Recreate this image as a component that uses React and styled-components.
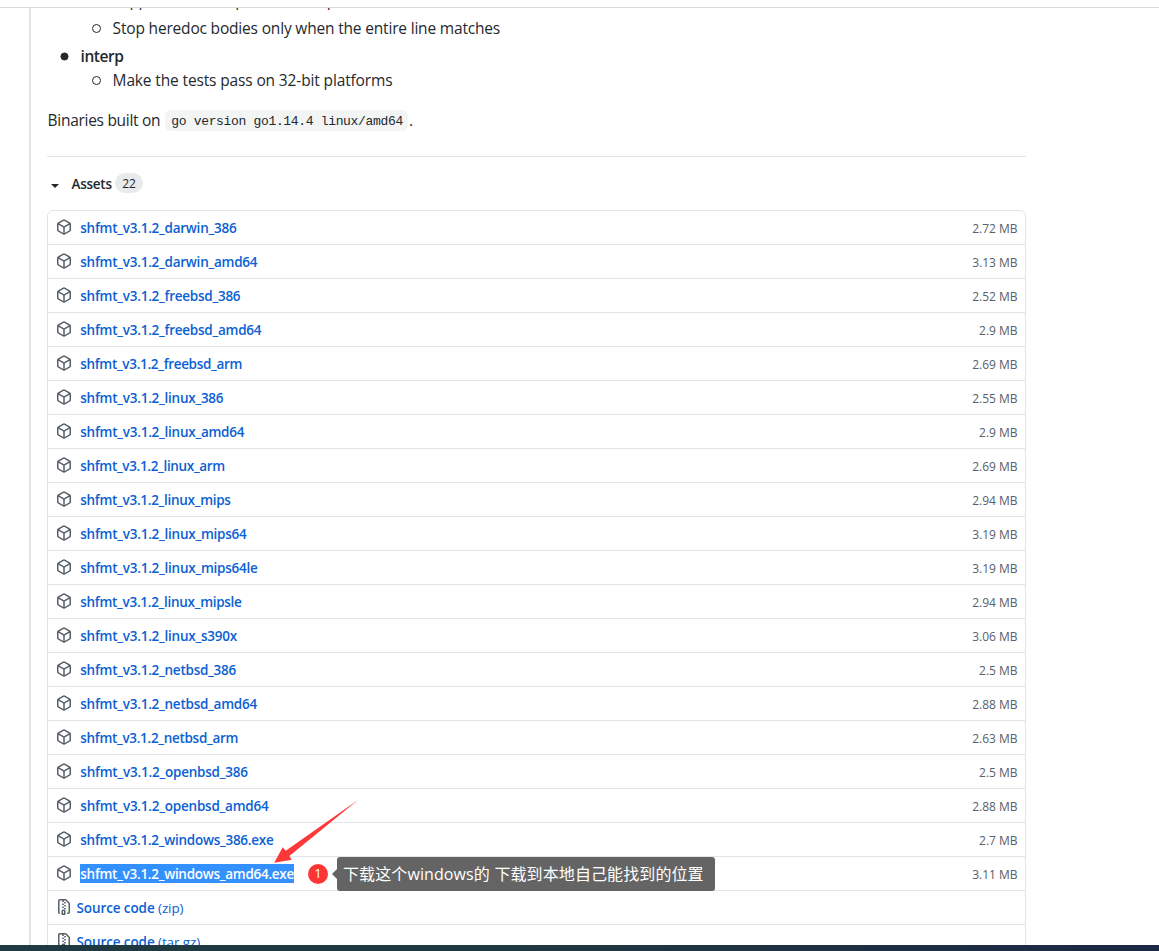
import React from "react";
import styled, { createGlobalStyle } from "styled-components";

const GlobalStyle = createGlobalStyle`
  * { box-sizing: border-box; }
  body {
    margin: 0;
    background: #fff;
    color: #24292e;
    font-family: "Open Sans", "Noto Sans CJK SC", sans-serif;
    font-size: 15.5px;
    line-height: 24px;
  }
`;

const Page = styled.div`
  display: flex;
  flex-direction: column;
  height: 951px;
  overflow: hidden;
`;

const HeaderEdge = styled.header`
  flex: none;
  height: 8px;
  border-bottom: 1px solid #d8dade;
`;

const Viewport = styled.main`
  flex: 1;
  min-height: 0;
  overflow: hidden;
  display: flex;
  padding-left: 29px;
`;

const Release = styled.article`
  width: 997px;
  flex: none;
  height: 1000px;
  padding-left: 16px;
  border-left: 2px solid #e1e4e8;
`;

const Notes = styled.section`
  display: flex;
  flex-direction: column;
  height: 149px;
  border-bottom: 1px solid #e1e4e8;
`;

const Changes = styled.ul`
  list-style: none;
  margin: ${(p) => (p.$nested ? "0" : "-20px 0 0")};
  padding: 0 0 0 32px;
`;

const Change = styled.li`
  display: flex;
  align-items: center;
  height: 24px;
  white-space: nowrap;
  margin-top: ${(p) => p.$gap || 0}px;
  letter-spacing: ${(p) => p.$tracking || -0.18}px;
  font-weight: ${(p) => (p.$strong ? 600 : 400)};

  &::before {
    content: "";
    flex: none;
    width: 7px;
    height: 7px;
    margin: 1px 11.6px 0 -19px;
    border: 1px solid #24292e;
    border-radius: 50%;
    background: ${(p) => (p.$strong ? "#24292e" : "transparent")};
    transform: ${(p) => (p.$strong ? "scale(0.9)" : "none")};
  }
`;

const BuildInfo = styled.p`
  display: flex;
  align-items: center;
  height: 24px;
  margin: 16px 0 0;
  padding-left: 0.6px;
  letter-spacing: -0.29px;
  white-space: nowrap;
`;

const Code = styled.code`
  height: 21px;
  margin: 0 1px 0 5px;
  padding: 1px 5px 0 6px;
  border-radius: 6px;
  background: #f3f4f4;
  font: 13px/21px "Liberation Mono", monospace;
  letter-spacing: -0.33px;
`;

const AssetsSummary = styled.div`
  display: flex;
  align-items: center;
  height: 20px;
  margin: 17px 0 16px;
  padding-left: 4px;
  font-size: 13.5px;
  font-weight: 600;
  letter-spacing: -0.28px;
`;

const Caret = styled.svg`
  width: 8px;
  height: 4px;
  margin: 3px 12.6px 0 0;
  fill: #24292e;
`;

const Counter = styled.span`
  width: 28px;
  height: 20px;
  margin: -2px 0 0 3.4px;
  border-radius: 10px;
  background: #e8eaec;
  font-size: 12px;
  font-weight: 500;
  line-height: 21px;
  text-align: center;
  letter-spacing: 0;
`;

const AssetList = styled.div`
  border: 1px solid #e1e4e8;
  border-radius: 6px;
`;

const AssetRow = styled.div`
  position: relative;
  display: flex;
  align-items: center;
  height: 34px;
  padding: 0 7.4px 0 8px;
  border-bottom: 1px solid #e1e4e8;
`;

const AssetIcon = styled.svg`
  flex: none;
  width: 16px;
  height: 16px;
  margin-top: -2px;
  fill: #586069;
`;

const AssetLink = styled.a`
  height: 19px;
  margin-left: ${(p) => (p.$archive ? 4.5 : 8)}px;
  padding-left: ${(p) => (p.$archive ? 0 : 0.3)}px;
  color: ${(p) => (p.$selected ? "#fff" : "#0b61d3")};
  background: ${(p) => (p.$selected ? "#3390ff" : "transparent")};
  font-size: 13.5px;
  font-weight: 600;
  line-height: 21px;
  letter-spacing: ${(p) => p.$tracking || -0.25}px;
  white-space: nowrap;
`;

const Format = styled.span`
  font-weight: 400;
`;

const AssetSize = styled.small`
  margin: 2px 0 0 auto;
  color: #586069;
  font-size: 12px;
  line-height: 18px;
`;

const Annotation = styled.div`
  position: absolute;
  left: 260px;
  top: 0;
  display: flex;
  align-items: center;
  height: 34px;
`;

const StepBadge = styled.span`
  width: 20px;
  height: 20px;
  border-radius: 50%;
  background: #fd3535;
  color: #fff;
  font-size: 13px;
  line-height: 19px;
  text-align: center;
`;

const Bubble = styled.div`
  position: relative;
  display: flex;
  gap: 4.5px;
  width: 378px;
  height: 34px;
  margin-left: 9px;
  padding-left: 6px;
  border-radius: 3px;
  background: #646464;
  color: #fff;
  font-size: 16px;
  line-height: 34px;
  letter-spacing: 0.1px;
  white-space: nowrap;

  &::before {
    content: "";
    position: absolute;
    left: -5px;
    top: 12px;
    border: solid transparent;
    border-width: 5px 5px 5px 0;
    border-right-color: #646464;
  }
`;

const Arrow = styled.svg`
  position: absolute;
  left: 226px;
  top: -58px;
  width: 86px;
  height: 66px;
  fill: #fd3838;
`;

const Taskbar = styled.footer`
  flex: none;
  height: 6px;
  background: linear-gradient(90deg, #203a42, #203840 45%, #1b2744);
`;

const assets = [
  ["darwin_386", "2.72 MB"],
  ["darwin_amd64", "3.13 MB"],
  ["freebsd_386", "2.52 MB"],
  ["freebsd_amd64", "2.9 MB"],
  ["freebsd_arm", "2.69 MB", -0.32],
  ["linux_386", "2.55 MB"],
  ["linux_amd64", "2.9 MB"],
  ["linux_arm", "2.69 MB", -0.33],
  ["linux_mips", "2.94 MB", -0.29],
  ["linux_mips64", "3.19 MB"],
  ["linux_mips64le", "3.19 MB"],
  ["linux_mipsle", "2.94 MB", -0.29],
  ["linux_s390x", "3.06 MB"],
  ["netbsd_386", "2.5 MB"],
  ["netbsd_amd64", "2.88 MB"],
  ["netbsd_arm", "2.63 MB", -0.31],
  ["openbsd_386", "2.5 MB", -0.22],
  ["openbsd_amd64", "2.88 MB", -0.23],
  ["windows_386.exe", "2.7 MB", -0.27],
  ["windows_amd64.exe", "3.11 MB", -0.28],
];

const PackageIcon = () => (
  <AssetIcon viewBox="0 0 16 16">
    <path fillRule="evenodd" d="M8.878.392a1.75 1.75 0 00-1.756 0l-5.25 3.045A1.75 1.75 0 001 4.951v6.098c0 .624.332 1.2.872 1.514l5.25 3.045a1.75 1.75 0 001.756 0l5.25-3.045c.54-.313.872-.89.872-1.514V4.951c0-.624-.332-1.2-.872-1.514L8.878.392zM7.875 1.69a.25.25 0 01.25 0l4.63 2.685L8 7.133 3.245 4.375l4.63-2.685zM2.5 5.677v5.372c0 .09.047.171.125.216l4.625 2.683V8.432L2.5 5.677zm6.25 8.271l4.625-2.683a.25.25 0 00.125-.216V5.677L8.75 8.432v5.516z" />
  </AssetIcon>
);

const ZipIcon = () => (
  <AssetIcon viewBox="0 0 16 16">
    <path fillRule="evenodd" d="M3.5 1.75a.25.25 0 01.25-.25h3a.75.75 0 000 1.5h.5a.75.75 0 000-1.5h2.086a.25.25 0 01.177.073l2.914 2.914a.25.25 0 01.073.177v8.586a.25.25 0 01-.25.25h-.5a.75.75 0 000 1.5h.5A1.75 1.75 0 0014 13.25V4.664c0-.464-.184-.909-.513-1.237L10.573.513A1.75 1.75 0 009.336 0H3.75A1.75 1.75 0 002 1.75v11.5c0 .649.353 1.214.874 1.515a.75.75 0 10.752-1.298.25.25 0 01-.126-.217V1.75zM8.75 3a.75.75 0 000 1.5h.5a.75.75 0 000-1.5h-.5zM6 5.25a.75.75 0 01.75-.75h.5a.75.75 0 010 1.5h-.5A.75.75 0 016 5.25zm2 1.5A.75.75 0 018.75 6h.5a.75.75 0 010 1.5h-.5A.75.75 0 018 6.75zm-1.25.75a.75.75 0 000 1.5h.5a.75.75 0 000-1.5h-.5zM8 9.75A.75.75 0 018.75 9h.5a.75.75 0 010 1.5h-.5A.75.75 0 018 9.75zm-.75.75a1.75 1.75 0 00-1.75 1.75v3c0 .414.336.75.75.75h2.5a.75.75 0 00.75-.75v-3a1.75 1.75 0 00-1.75-1.75h-.5zM7 12.25a.25.25 0 01.25-.25h.5a.25.25 0 01.25.25v2.25H7v-2.25z" />
  </AssetIcon>
);

const DownloadHint = () => (
  <>
    <Annotation>
      <StepBadge>1</StepBadge>
      <Bubble>
        <span>下载这个windows的</span>
        <span>下载到本地自己能找到的位置</span>
      </Bubble>
    </Annotation>
    <Arrow viewBox="0 0 86 66">
      <path d="M84.3 0.8 L11.7 51.7 L8.7 48.3 L0.2 63.8 L17.7 60.7 L15.4 57.1 Z" />
    </Arrow>
  </>
);

export default function App() {
  return (
    <>
      <GlobalStyle />
      <Page>
        <HeaderEdge />
        <Viewport>
          <Release>
            <Notes>
              <Changes>
                <li>
                  <Changes $nested>
                    <Change $tracking={-0.5}>Support standard parameter expansion</Change>
                    <Change $gap={4}>Stop heredoc bodies only when the entire line matches</Change>
                  </Changes>
                </li>
                <Change $strong $gap={4} $tracking={-0.45}>interp</Change>
                <li>
                  <Changes $nested>
                    <Change $tracking={-0.14}>Make the tests pass on 32-bit platforms</Change>
                  </Changes>
                </li>
              </Changes>
              <BuildInfo>
                Binaries built on
                <Code>go version go1.14.4 linux/amd64</Code>.
              </BuildInfo>
            </Notes>
            <AssetsSummary>
              <Caret viewBox="0 0 8 4"><path d="M0 0h8L4 4z" /></Caret>
              Assets
              <Counter>22</Counter>
            </AssetsSummary>
            <AssetList>
              {assets.map(([target, size, tracking]) => {
                const selected = target === "windows_amd64.exe";
                return (
                  <AssetRow key={target}>
                    <PackageIcon />
                    <AssetLink $selected={selected} $tracking={tracking}>
                      shfmt_v3.1.2_{target}
                    </AssetLink>
                    <AssetSize>{size}</AssetSize>
                    {selected && <DownloadHint />}
                  </AssetRow>
                );
              })}
              {["zip", "tar.gz"].map((format) => (
                <AssetRow key={format}>
                  <ZipIcon />
                  <AssetLink $archive $tracking={-0.1}>
                    Source code <Format>({format})</Format>
                  </AssetLink>
                </AssetRow>
              ))}
            </AssetList>
          </Release>
        </Viewport>
        <Taskbar />
      </Page>
    </>
  );
}
